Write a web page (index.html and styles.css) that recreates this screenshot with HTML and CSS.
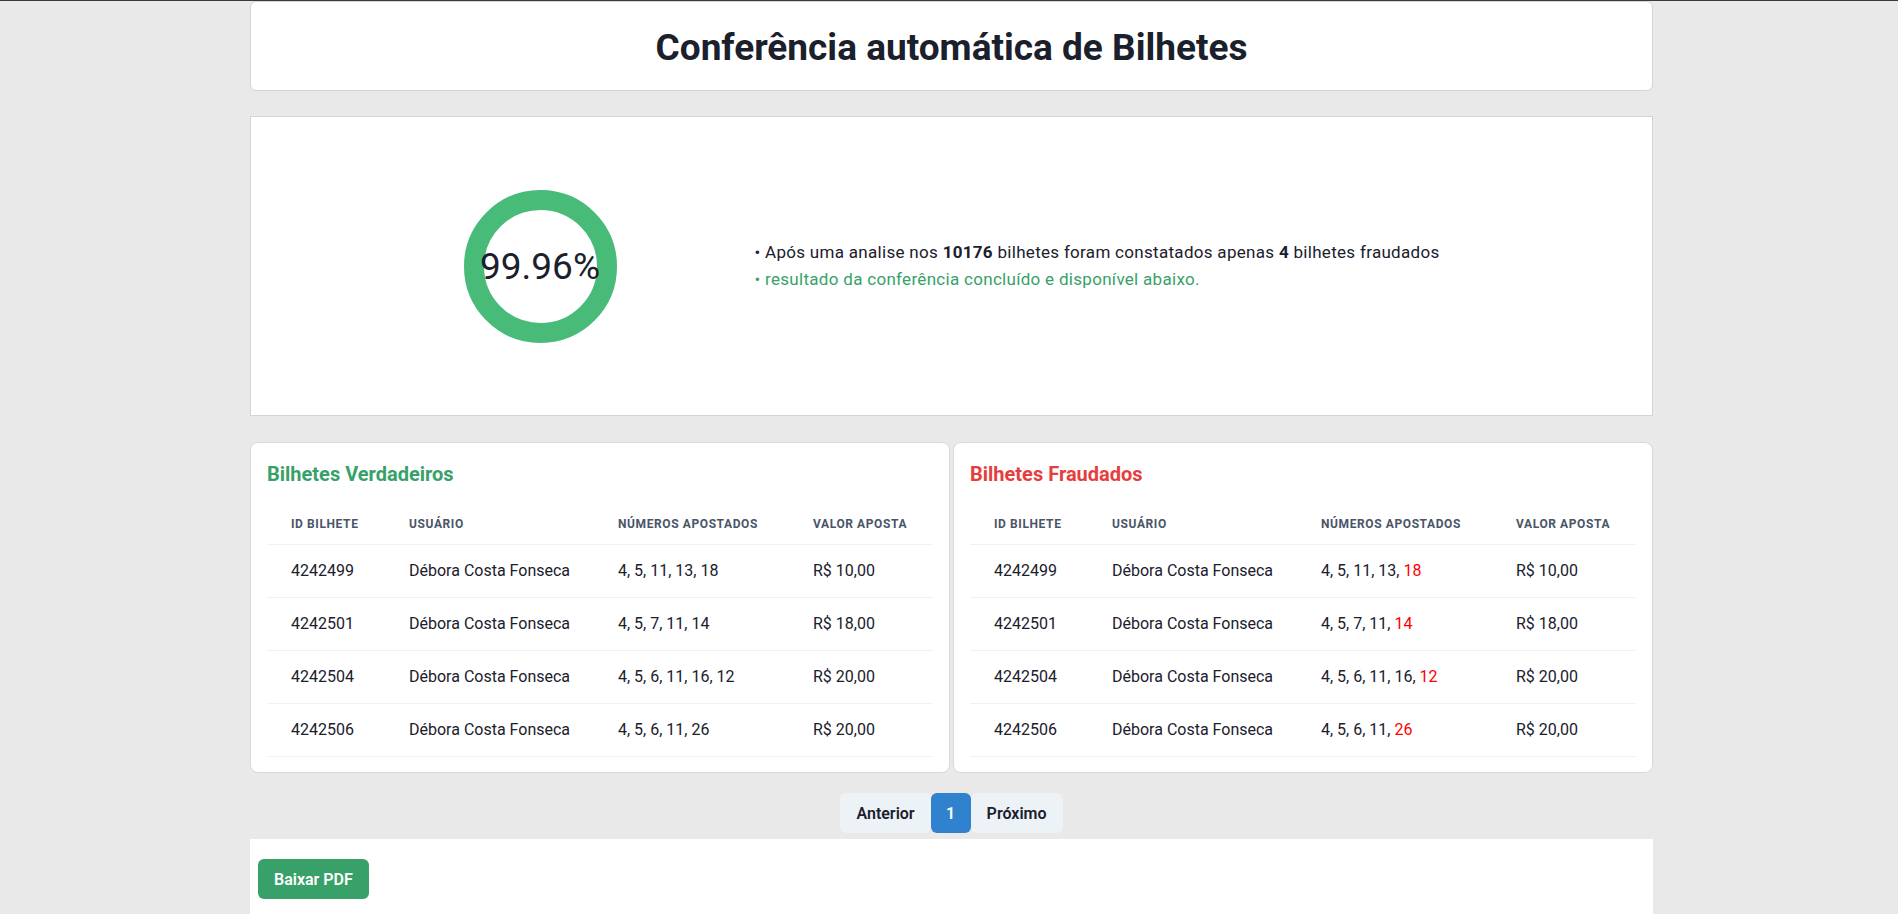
FILE: index.html
```html
<!DOCTYPE html>
<html lang="pt-BR">
<head>
<meta charset="utf-8">
<title>Conferência automática de Bilhetes</title>
<link rel="stylesheet" href="styles.css">
</head>
<body>
<div class="page">
  <header class="title-card">
    <h1 class="title">Conferência automática de Bilhetes</h1>
  </header>

  <section class="stats-card">
    <div class="donut">
      <svg class="donut-svg" viewBox="0 0 153 153" width="153" height="153">
        <circle cx="76.5" cy="76.5" r="66.5" fill="none" stroke="#EDF2F7" stroke-width="20"/>
        <circle cx="76.5" cy="76.5" r="66.5" fill="none" stroke="#48BB78" stroke-width="20" stroke-dasharray="417.66 417.83" transform="rotate(-90 76.5 76.5)"/>
      </svg>
      <span class="donut-label">99.96%</span>
    </div>
    <div class="summary">
      <p class="line">• Após uma analise nos <b>10176</b> bilhetes foram constatados apenas <b>4</b> bilhetes fraudados</p>
      <p class="line ok">• resultado da conferência concluído e disponível abaixo.</p>
    </div>
  </section>

  <div class="tables">
    <section class="tcard">
      <h2 class="tcard-title green">Bilhetes Verdadeiros</h2>
      <table class="tbl">
        <colgroup><col class="c1"><col class="c2"><col class="c3"><col class="c4"></colgroup>
        <thead>
          <tr><th>ID Bilhete</th><th>Usuário</th><th>Números Apostados</th><th>Valor Aposta</th></tr>
        </thead>
        <tbody>
          <tr><td>4242499</td><td>Débora Costa Fonseca</td><td>4, 5, 11, 13, 18</td><td>R$ 10,00</td></tr>
          <tr><td>4242501</td><td>Débora Costa Fonseca</td><td>4, 5, 7, 11, 14</td><td>R$ 18,00</td></tr>
          <tr><td>4242504</td><td>Débora Costa Fonseca</td><td>4, 5, 6, 11, 16, 12</td><td>R$ 20,00</td></tr>
          <tr><td>4242506</td><td>Débora Costa Fonseca</td><td>4, 5, 6, 11, 26</td><td>R$ 20,00</td></tr>
        </tbody>
      </table>
    </section>

    <section class="tcard">
      <h2 class="tcard-title red">Bilhetes Fraudados</h2>
      <table class="tbl">
        <colgroup><col class="c1"><col class="c2"><col class="c3"><col class="c4"></colgroup>
        <thead>
          <tr><th>ID Bilhete</th><th>Usuário</th><th>Números Apostados</th><th>Valor Aposta</th></tr>
        </thead>
        <tbody>
          <tr><td>4242499</td><td>Débora Costa Fonseca</td><td>4, 5, 11, 13, <span class="bad">18</span></td><td>R$ 10,00</td></tr>
          <tr><td>4242501</td><td>Débora Costa Fonseca</td><td>4, 5, 7, 11, <span class="bad">14</span></td><td>R$ 18,00</td></tr>
          <tr><td>4242504</td><td>Débora Costa Fonseca</td><td>4, 5, 6, 11, 16, <span class="bad">12</span></td><td>R$ 20,00</td></tr>
          <tr><td>4242506</td><td>Débora Costa Fonseca</td><td>4, 5, 6, 11, <span class="bad">26</span></td><td>R$ 20,00</td></tr>
        </tbody>
      </table>
    </section>
  </div>

  <nav class="pager">
    <button class="pbtn">Anterior</button>
    <button class="pbtn active">1</button>
    <button class="pbtn">Próximo</button>
  </nav>

  <div class="footer">
    <button class="pdf-btn">Baixar PDF</button>
  </div>
</div>
</body>
</html>
```

FILE: styles.css
```css
* { box-sizing: border-box; }

html, body {
  margin: 0;
  padding: 0;
}

body {
  background: #e9e9e9;
  border-top: 1px solid #3a3a3a;
  padding-left: 5px;
  font-family: "Roboto", "Segoe UI", "Liberation Sans", sans-serif;
  color: #1A202C;
  font-size: 16px;
}

.page {
  width: 1403px;
  margin: 0 auto;
}

.title-card {
  background: #fff;
  border: 1px solid #d4d4d4;
  border-radius: 6px;
  padding: 24px 0 20px;
  text-align: center;
}

.title {
  margin: 0;
  font-size: 37px;
  line-height: 44px;
  font-weight: 700;
  color: #1A202C;
}

.stats-card {
  margin-top: 25px;
  height: 300px;
  background: #fff;
  border: 1px solid #d4d4d4;
  display: flex;
  align-items: center;
  justify-content: center;
  gap: 138px;
}

.donut {
  display: grid;
  place-items: center;
  width: 153px;
  height: 153px;
}

.donut-svg, .donut-label {
  grid-area: 1 / 1;
}

.donut-label {
  font-size: 37px;
  line-height: 1;
  color: #1A202C;
}

.summary {
  display: flex;
  flex-direction: column;
}

.line {
  margin: 0;
  font-size: 17px;
  letter-spacing: 0.3px;
  line-height: 27px;
  white-space: nowrap;
}

.line b { font-weight: 700; }

.line.ok { color: #38A169; }

.tables {
  margin-top: 26px;
  display: grid;
  grid-template-columns: 1fr 1fr;
  gap: 3px;
}

.tcard {
  background: #fff;
  border: 1px solid #d9d9d9;
  border-radius: 8px;
  padding: 19px 16px 15px;
}

.tcard-title {
  margin: 0 0 18px;
  font-size: 20px;
  line-height: 24px;
  font-weight: 700;
}

.green { color: #38A169; }
.red { color: #E53E3E; }

.tbl {
  width: 100%;
  border-collapse: collapse;
  table-layout: fixed;
}

.c1 { width: 118px; }
.c2 { width: 209px; }
.c3 { width: 195px; }

.tbl th {
  text-align: left;
  padding: 12px 24px;
  font-size: 12px;
  line-height: 16px;
  font-weight: 700;
  text-transform: uppercase;
  letter-spacing: 0.05em;
  color: #4A5568;
  border-bottom: 1px solid #EDF2F7;
  white-space: nowrap;
}

.tbl td {
  padding: 16px 24px;
  font-size: 16px;
  line-height: 20px;
  color: #1A202C;
  border-bottom: 1px solid #EDF2F7;
  white-space: nowrap;
}

.bad { color: #ff0000; }

.pager {
  margin-top: 20px;
  display: flex;
  justify-content: center;
}

.pbtn {
  height: 40px;
  min-width: 40px;
  padding: 0 16px;
  border: 0;
  border-radius: 6px;
  background: #EDF2F7;
  color: #1A202C;
  font-family: inherit;
  font-size: 16px;
  font-weight: 600;
}

.pbtn.active {
  background: #3182CE;
  color: #fff;
  padding: 0 12px;
}

.footer {
  margin-top: 6px;
  background: #fff;
  padding: 20px 8px;
}

.pdf-btn {
  height: 40px;
  padding: 0 16px;
  border: 0;
  border-radius: 6px;
  background: #38A169;
  color: #fff;
  font-family: inherit;
  font-size: 16px;
  font-weight: 600;
}
```
